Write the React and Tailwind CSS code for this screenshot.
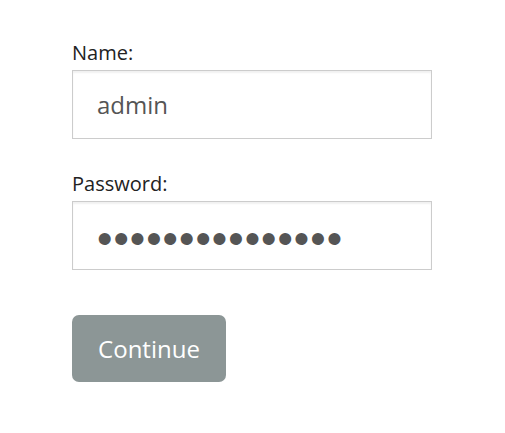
export default function App() {
  return (
    <div className="min-h-[433px] bg-white pl-[72px] pt-[39px] text-[#333]" style={{ fontFamily: '"Open Sans", "Noto Sans", sans-serif' }}>
      <form className="w-[360px] flex flex-col">
        <label className="text-[20px] leading-[27px] text-[#222]">Name:</label>
        <input
          type="text"
          defaultValue="admin"
          className="mt-[4px] h-[69px] w-[360px] border border-[#cccccc] px-[24px] text-[24px] text-[#555] shadow-[inset_0_2px_2px_rgba(0,0,0,0.06)] outline-none"
        />
        <label className="mt-[31px] text-[20px] leading-[27px] text-[#222]">Password:</label>
        <input
          type="password"
          defaultValue="adminpassword12"
          className="mt-[4px] h-[69px] w-[360px] border border-[#cccccc] px-[24px] pt-[6px] text-[44px] tracking-[1px] text-[#555] shadow-[inset_0_2px_2px_rgba(0,0,0,0.06)] outline-none"
          style={{ fontFamily: '"Liberation Sans", sans-serif' }}
        />
        <button
          type="button"
          className="mt-[45px] h-[67px] w-[154px] rounded-[7px] bg-[#8c9696] text-[24px] text-white"
        >
          Continue
        </button>
      </form>
    </div>
  )
}
